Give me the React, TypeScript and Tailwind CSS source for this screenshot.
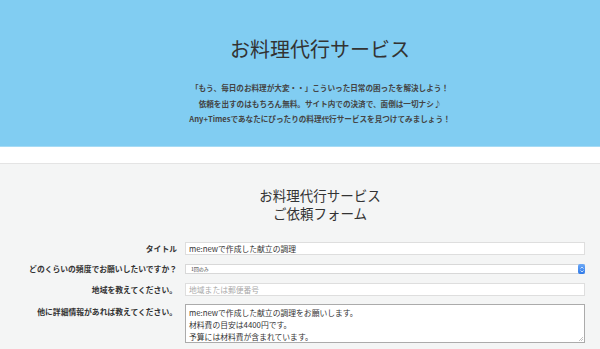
import React from "react";

const font = { fontFamily: '"Noto Sans CJK JP", "Noto Sans", sans-serif' };

export default function App() {
  return (
    <div
      className="w-[600px] h-[349px] overflow-hidden bg-white text-[#333]"
      style={font}
    >
      {/* Header */}
      <div className="h-[147px] bg-[#81cdf2] border-b border-[#a6dbf5] pl-[40px] flex flex-col items-center">
        <h1 className="mt-[35px] text-[20px] leading-[28px] font-normal text-[#333]">
          お料理代行サービス
        </h1>
        <div className="mt-[17px] text-[7.6px] leading-[15.5px] font-bold text-[#444] text-center">
          <p>「もう、毎日のお料理が大変・・」こういった日常の困ったを解決しよう！</p>
          <p>依頼を出すのはもちろん無料。サイト内での決済で、面倒は一切ナシ♪</p>
          <p>Any+Timesであなたにぴったりの料理代行サービスを見つけてみましょう！</p>
        </div>
      </div>

      {/* Gap */}
      <div className="h-[16px] bg-white" />

      {/* Form section */}
      <div className="h-[200px] bg-[#f4f5f5] border-t border-[#e4e4e4]">
        <div className="pl-[40px] pt-[22px] flex flex-col items-center text-[13.5px] leading-[18px] text-[#333]">
          <p>お料理代行サービス</p>
          <p>ご依頼フォーム</p>
        </div>

        <div className="mt-[20px] grid grid-cols-[177px_400px] gap-x-[8px] items-center">
          <label className="text-right text-[7.8px] font-bold leading-[13px]">タイトル</label>
          <div className="h-[13px] bg-white border border-[#dedede] flex items-center pl-[3px] text-[7.8px]">
            me:newで作成した献立の調理
          </div>

          <label className="mt-[9px] text-right text-[7.8px] font-bold leading-[10px]">
            どのくらいの頻度でお願いしたいですか？
          </label>
          <div className="mt-[9px] h-[10px] bg-white border border-[#d8d8d8] flex items-center justify-between pl-[5px] text-[5px] leading-[8px]">
            <span>1回のみ</span>
            <span className="w-[7px] h-[10px] -mr-[1px] rounded-[2px] bg-gradient-to-b from-[#6aa8f7] to-[#2f7ae8] flex flex-col items-center justify-center">
              <svg width="4" height="7" viewBox="0 0 4 7">
                <path d="M0.5 2.5 L2 1 L3.5 2.5" stroke="#fff" strokeWidth="0.7" fill="none" />
                <path d="M0.5 4.5 L2 6 L3.5 4.5" stroke="#fff" strokeWidth="0.7" fill="none" />
              </svg>
            </span>
          </div>

          <label className="mt-[9px] text-right text-[7.8px] font-bold leading-[13px]">
            地域を教えてください。
          </label>
          <div className="mt-[9px] h-[13px] bg-white border border-[#dedede] flex items-center pl-[3px] text-[7.8px] text-[#aaa]">
            地域または郵便番号
          </div>

          <label className="mt-[8px] self-start pt-[2px] text-right text-[7.8px] font-bold leading-[12px]">
            他に詳細情報があれば教えてください。
          </label>
          <div className="mt-[8px] relative h-[39px] bg-white border border-[#ababab] px-[3px] pt-[2px] text-[7.8px] leading-[12px]">
            <p>me:newで作成した献立の調理をお願いします。</p>
            <p>材料費の目安は4400円です。</p>
            <p>予算には材料費が含まれています。</p>
            <svg
              className="absolute right-[1px] bottom-[1px]"
              width="4"
              height="4"
              viewBox="0 0 4 4"
            >
              <path d="M4 0 L0 4 M4 2 L2 4" stroke="#999" strokeWidth="0.6" />
            </svg>
          </div>
        </div>
      </div>
    </div>
  );
}
